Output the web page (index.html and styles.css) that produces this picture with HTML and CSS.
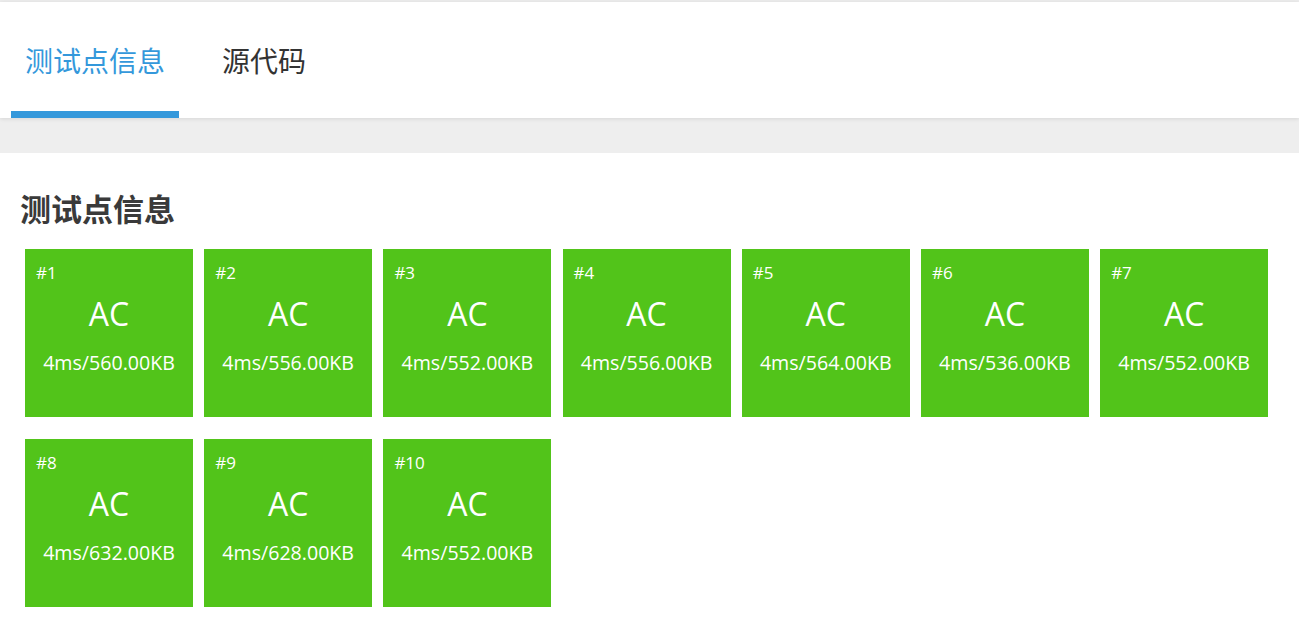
FILE: index.html
```html
<!DOCTYPE html>
<html lang="zh-CN">
<head>
<meta charset="utf-8">
<title>测试点信息</title>
<link rel="stylesheet" href="styles.css">
</head>
<body>
<div class="topline"></div>
<nav class="tabs">
  <div class="tab active">测试点信息</div>
  <div class="tab">源代码</div>
</nav>
<div class="band"></div>
<main class="content">
  <h2 class="heading">测试点信息</h2>
  <div class="cards">
    <div class="card"><div class="idx">#1</div><div class="status">AC</div><div class="stats">4ms/560.00KB</div></div>
    <div class="card"><div class="idx">#2</div><div class="status">AC</div><div class="stats">4ms/556.00KB</div></div>
    <div class="card"><div class="idx">#3</div><div class="status">AC</div><div class="stats">4ms/552.00KB</div></div>
    <div class="card"><div class="idx">#4</div><div class="status">AC</div><div class="stats">4ms/556.00KB</div></div>
    <div class="card"><div class="idx">#5</div><div class="status">AC</div><div class="stats">4ms/564.00KB</div></div>
    <div class="card"><div class="idx">#6</div><div class="status">AC</div><div class="stats">4ms/536.00KB</div></div>
    <div class="card"><div class="idx">#7</div><div class="status">AC</div><div class="stats">4ms/552.00KB</div></div>
    <div class="card"><div class="idx">#8</div><div class="status">AC</div><div class="stats">4ms/632.00KB</div></div>
    <div class="card"><div class="idx">#9</div><div class="status">AC</div><div class="stats">4ms/628.00KB</div></div>
    <div class="card"><div class="idx">#10</div><div class="status">AC</div><div class="stats">4ms/552.00KB</div></div>
  </div>
</main>
</body>
</html>
```

FILE: styles.css
```css
html, body {
  margin: 0;
  padding: 0;
  background: #ffffff;
  font-family: "Open Sans", "Noto Sans CJK SC", sans-serif;
  color: #333333;
}

.topline {
  height: 2px;
  background: #ececec;
}

.tabs {
  display: flex;
  padding-left: 11px;
  background: #ffffff;
  position: relative;
  z-index: 1;
  box-shadow: 0 1px 4px rgba(0, 0, 0, 0.1);
}

.tab {
  box-sizing: border-box;
  height: 116px;
  padding: 6px 14px 0;
  border-bottom: 7px solid transparent;
  display: flex;
  align-items: center;
  font-family: "Noto Sans CJK SC", sans-serif;
  font-size: 28px;
  color: #333333;
}

.tab + .tab {
  margin-left: 29px;
}

.tab.active {
  color: #3498db;
  border-bottom-color: #3498db;
}

.band {
  height: 35px;
  background: #eeeeee;
}

.content {
  padding: 0 0 0 20px;
}

.heading {
  margin: 0;
  padding-top: 33px;
  font-family: "Noto Sans CJK SC", sans-serif;
  font-size: 31px;
  font-weight: bold;
  line-height: 44px;
  color: #3a3a3a;
}

.cards {
  display: flex;
  flex-wrap: wrap;
  column-gap: 11.2px;
  row-gap: 22px;
  padding-left: 5px;
  margin-top: 19px;
}

.card {
  box-sizing: border-box;
  width: 168px;
  height: 168px;
  background: #52c41a;
  color: #ffffff;
  padding: 14px 11px 0;
}

.idx {
  font-size: 17px;
  line-height: 20px;
}

.status {
  margin-top: 13px;
  text-align: center;
  font-size: 32px;
  line-height: 36px;
}

.stats {
  margin-top: 19px;
  text-align: center;
  font-size: 19.6px;
  line-height: 24px;
}
```
